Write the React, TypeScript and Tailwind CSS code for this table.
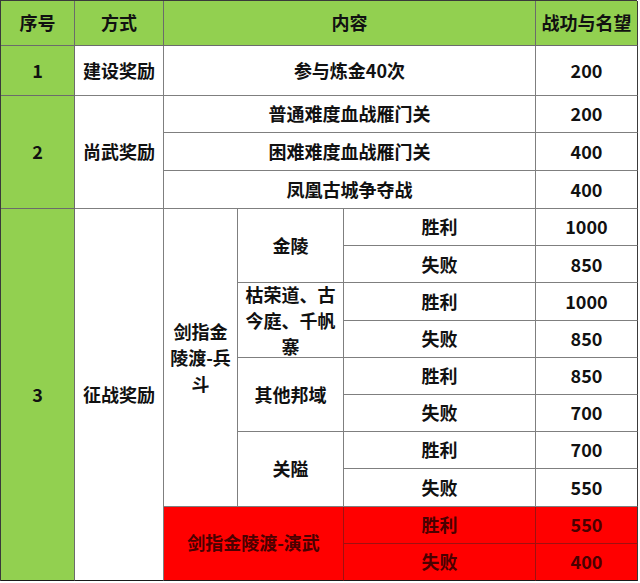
import * as React from "react";

const font = { fontFamily: '"Noto Sans CJK SC", "Noto Sans", sans-serif' };

type CellProps = {
  col: string;
  row: string;
  tone?: "green" | "white" | "red";
  className?: string;
  children?: React.ReactNode;
};

function Cell({ col, row, tone = "white", className = "", children }: CellProps) {
  const toneCls =
    tone === "green"
      ? "bg-[#92d050] border-[#6b6b6b]"
      : tone === "red"
      ? "bg-[#ff0000] border-[#a01010] text-[#4a0000]"
      : "bg-white border-[#7f7f7f]";
  return (
    <div
      className={`${col} ${row} ${toneCls} flex items-center justify-center text-center border-r border-b ${className}`}
    >
      {children}
    </div>
  );
}

const results = [
  { row: "row-start-4 row-end-5", label: "胜利", value: "1000" },
  { row: "row-start-5 row-end-6", label: "失败", value: "850" },
  { row: "row-start-6 row-end-7", label: "胜利", value: "1000" },
  { row: "row-start-7 row-end-8", label: "失败", value: "850" },
  { row: "row-start-8 row-end-9", label: "胜利", value: "850" },
  { row: "row-start-9 row-end-10", label: "失败", value: "700" },
  { row: "row-start-10 row-end-11", label: "胜利", value: "700" },
  { row: "row-start-11 row-end-12", label: "失败", value: "550" },
];

export default function App() {
  return (
    <div className="w-[640px] h-[583px] bg-white" style={font}>
      <div className="w-[637px] grid grid-cols-[74px_89px_74px_106px_192px_102px] grid-rows-[45px_50px_37px_38px_38px_repeat(10,37.2px)] border-l border-t border-[#3a3a3a] text-[18px] font-bold text-[#111] leading-[1.42]">
        {/* header */}
        <Cell col="col-start-1 col-end-2" row="row-start-1 row-end-2" tone="green">序号</Cell>
        <Cell col="col-start-2 col-end-3" row="row-start-1 row-end-2" tone="green">方式</Cell>
        <Cell col="col-start-3 col-end-6" row="row-start-1 row-end-2" tone="green">内容</Cell>
        <Cell col="col-start-6 col-end-7" row="row-start-1 row-end-2" tone="green" className="border-r-[#3a3a3a]">战功与名望</Cell>

        {/* 1 */}
        <Cell col="col-start-1 col-end-2" row="row-start-2 row-end-3" tone="green">1</Cell>
        <Cell col="col-start-2 col-end-3" row="row-start-2 row-end-3">建设奖励</Cell>
        <Cell col="col-start-3 col-end-6" row="row-start-2 row-end-3">参与炼金40次</Cell>
        <Cell col="col-start-6 col-end-7" row="row-start-2 row-end-3" className="border-r-[#3a3a3a]">200</Cell>

        {/* 2 */}
        <Cell col="col-start-1 col-end-2" row="row-start-3 row-end-6" tone="green">2</Cell>
        <Cell col="col-start-2 col-end-3" row="row-start-3 row-end-6">尚武奖励</Cell>
        <Cell col="col-start-3 col-end-6" row="row-start-3 row-end-4">普通难度血战雁门关</Cell>
        <Cell col="col-start-6 col-end-7" row="row-start-3 row-end-4" className="border-r-[#3a3a3a]">200</Cell>
        <Cell col="col-start-3 col-end-6" row="row-start-4 row-end-5">困难难度血战雁门关</Cell>
        <Cell col="col-start-6 col-end-7" row="row-start-4 row-end-5" className="border-r-[#3a3a3a]">400</Cell>
        <Cell col="col-start-3 col-end-6" row="row-start-5 row-end-6">凤凰古城争夺战</Cell>
        <Cell col="col-start-6 col-end-7" row="row-start-5 row-end-6" className="border-r-[#3a3a3a]">400</Cell>

        {/* 3 */}
        <Cell col="col-start-1 col-end-2" row="row-start-6 row-end-[16]" tone="green" className="border-b-[#1a1a1a]">3</Cell>
        <Cell col="col-start-2 col-end-3" row="row-start-6 row-end-[16]" className="border-b-[#1a1a1a]">征战奖励</Cell>
        <Cell col="col-start-3 col-end-4" row="row-start-6 row-end-[14]" className="px-1 font-bold leading-[1.45]">
          剑指金陵渡-兵斗
        </Cell>
        <Cell col="col-start-4 col-end-5" row="row-start-6 row-end-8">金陵</Cell>
        <Cell col="col-start-4 col-end-5" row="row-start-8 row-end-10" className="leading-[1.45]">枯荣道、古今庭、千帆寨</Cell>
        <Cell col="col-start-4 col-end-5" row="row-start-10 row-end-12">其他邦域</Cell>
        <Cell col="col-start-4 col-end-5" row="row-start-12 row-end-14">关隘</Cell>

        {results.map((r, i) => (
          <React.Fragment key={i}>
            <Cell col="col-start-5 col-end-6" row={rowFor(i)}>{r.label}</Cell>
            <Cell col="col-start-6 col-end-7" row={rowFor(i)} className="border-r-[#3a3a3a]">{r.value}</Cell>
          </React.Fragment>
        ))}

        <Cell col="col-start-3 col-end-5" row="row-start-[14] row-end-[16]" tone="red" className="border-b-[#1a1a1a]">
          剑指金陵渡-演武
        </Cell>
        <Cell col="col-start-5 col-end-6" row="row-start-[14] row-end-[15]" tone="red">胜利</Cell>
        <Cell col="col-start-6 col-end-7" row="row-start-[14] row-end-[15]" tone="red" className="border-r-[#3a3a3a]">550</Cell>
        <Cell col="col-start-5 col-end-6" row="row-start-[15] row-end-[16]" tone="red" className="border-b-[#1a1a1a]">失败</Cell>
        <Cell col="col-start-6 col-end-7" row="row-start-[15] row-end-[16]" tone="red" className="border-r-[#3a3a3a] border-b-[#1a1a1a]">400</Cell>
      </div>
    </div>
  );
}

function rowFor(i: number) {
  const rows = [
    "row-start-6 row-end-7",
    "row-start-7 row-end-8",
    "row-start-8 row-end-9",
    "row-start-9 row-end-10",
    "row-start-10 row-end-11",
    "row-start-11 row-end-12",
    "row-start-12 row-end-13",
    "row-start-13 row-end-14",
  ];
  return rows[i];
}
